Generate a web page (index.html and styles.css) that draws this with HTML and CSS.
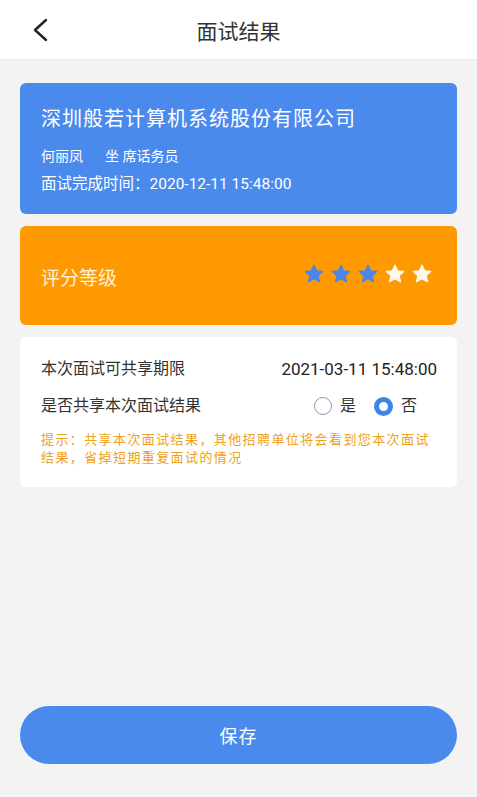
FILE: index.html
```html
<!DOCTYPE html>
<html>
    <head>
        <title>面试结果</title>
        <link rel="stylesheet" href="styles.css">
    </head>
    <body>
        <div class="page">
            <div class="header">
                <svg class="back" width="18" height="24" viewBox="0 0 18 24">
                    <path d="M15 2 L4 12 L15 22" fill="none" stroke="#222" stroke-width="2.4" stroke-linecap="round" stroke-linejoin="round"/>
                </svg>
                <span class="headerTitle">面试结果</span>
            </div>

            <div class="content">
                <div class="companyCard">
                    <div class="companyName">深圳般若计算机系统股份有限公司</div>
                    <div class="personInfo">何丽凤<span class="job">坐 席话务员</span></div>
                    <div class="finishTime">面试完成时间：2020-12-11 15:48:00</div>
                </div>

                <div class="scoreCard">
                    <span class="scoreLabel">评分等级</span>
                    <div class="stars">
                        <svg class="star" viewBox="0 0 24 24"><path class="starOn" d="M12 2.5 L14.8 8.6 L21.4 9.3 L16.4 13.8 L17.9 20.4 L12 17 L6.1 20.4 L7.6 13.8 L2.6 9.3 L9.2 8.6 Z"/></svg>
                        <svg class="star" viewBox="0 0 24 24"><path class="starOn" d="M12 2.5 L14.8 8.6 L21.4 9.3 L16.4 13.8 L17.9 20.4 L12 17 L6.1 20.4 L7.6 13.8 L2.6 9.3 L9.2 8.6 Z"/></svg>
                        <svg class="star" viewBox="0 0 24 24"><path class="starOn" d="M12 2.5 L14.8 8.6 L21.4 9.3 L16.4 13.8 L17.9 20.4 L12 17 L6.1 20.4 L7.6 13.8 L2.6 9.3 L9.2 8.6 Z"/></svg>
                        <svg class="star" viewBox="0 0 24 24"><path class="starOff" d="M12 2.5 L14.8 8.6 L21.4 9.3 L16.4 13.8 L17.9 20.4 L12 17 L6.1 20.4 L7.6 13.8 L2.6 9.3 L9.2 8.6 Z"/></svg>
                        <svg class="star" viewBox="0 0 24 24"><path class="starOff" d="M12 2.5 L14.8 8.6 L21.4 9.3 L16.4 13.8 L17.9 20.4 L12 17 L6.1 20.4 L7.6 13.8 L2.6 9.3 L9.2 8.6 Z"/></svg>
                    </div>
                </div>

                <div class="shareCard">
                    <div class="row">
                        <span>本次面试可共享期限</span>
                        <span class="date">2021-03-11 15:48:00</span>
                    </div>
                    <div class="row rowShare">
                        <span>是否共享本次面试结果</span>
                        <div class="radios">
                            <span class="radio"></span><span class="radioText">是</span>
                            <span class="radio radioOn"></span><span class="radioText">否</span>
                        </div>
                    </div>
                    <div class="hint">提示：共享本次面试结果，其他招聘单位将会看到您本次面试结果，省掉短期重复面试的情况</div>
                </div>
            </div>

            <div class="footer">
                <button class="saveButton">保存</button>
            </div>
        </div>
    </body>
</html>
```

FILE: styles.css
```css
body {
    margin: 0;
    background-color: #f3f3f4;
    font-family: Roboto, "Noto Sans CJK SC", sans-serif;
}

.page {
    height: 797px;
    display: flex;
    flex-direction: column;
}

.header {
    height: 60px;
    background-color: white;
    border-bottom: 1px solid #ececec;
    display: flex;
    align-items: center;
    justify-content: center;
    position: relative;
    box-sizing: border-box;
}

.back {
    position: absolute;
    left: 31px;
    top: 18px;
}

.headerTitle {
    font-size: 21px;
    color: #333;
}

.content {
    flex: 1;
    padding: 23px 20px 0 20px;
    display: flex;
    flex-direction: column;
    gap: 12px;
}

.companyCard {
    background-color: #4b8aed;
    border-radius: 6px;
    padding: 24px 21px 20px 21px;
    color: white;
}

.companyName {
    font-size: 20px;
    line-height: 24px;
    letter-spacing: 1px;
}

.personInfo {
    margin-top: 15px;
    font-size: 14px;
    line-height: 20px;
}

.job {
    margin-left: 22px;
}

.finishTime {
    margin-top: 8px;
    font-size: 15.5px;
    line-height: 20px;
}

.scoreCard {
    background-color: #ff9902;
    border-radius: 6px;
    height: 99px;
    padding: 0 24px 0 21px;
    display: flex;
    align-items: center;
    justify-content: space-between;
}

.scoreLabel {
    font-size: 19px;
    color: #fdf3dc;
    margin-top: 2px;
}

.stars {
    display: flex;
    gap: 5px;
    margin-top: -4px;
}

.star {
    width: 22px;
    height: 22px;
}

.starOn {
    fill: #4b86e8;
    stroke: #4b86e8;
    stroke-width: 1.5;
    stroke-linejoin: round;
}

.starOff {
    fill: #fdf8ea;
    stroke: #fdf8ea;
    stroke-width: 1.5;
    stroke-linejoin: round;
}

.shareCard {
    background-color: white;
    border-radius: 6px;
    padding: 21px 20px 20px 21px;
    color: #333;
}

.row {
    display: flex;
    justify-content: space-between;
    align-items: center;
    font-size: 16px;
    line-height: 22px;
}

.rowShare {
    margin-top: 15px;
}

.date {
    color: #222;
    font-size: 17px;
}

.radios {
    display: flex;
    align-items: center;
    margin-right: 20px;
}

.radio {
    width: 16px;
    height: 16px;
    border: 1.5px solid #8a9ab3;
    border-radius: 50%;
}

.radioOn {
    width: 9px;
    height: 9px;
    border: 5px solid #3f82ea;
    background-color: white;
    margin-left: 18px;
}

.radioText {
    font-size: 16px;
    margin-left: 8px;
}

.hint {
    margin-top: 14px;
    font-size: 13px;
    line-height: 18px;
    letter-spacing: 1.4px;
    color: #f0a020;
}

.footer {
    padding: 0 20px 33px 20px;
}

.saveButton {
    width: 100%;
    height: 58px;
    border: none;
    border-radius: 29px;
    background-color: #4b8aed;
    color: white;
    font-size: 18px;
    font-family: Roboto, "Noto Sans CJK SC", sans-serif;
    letter-spacing: 1px;
}
```
